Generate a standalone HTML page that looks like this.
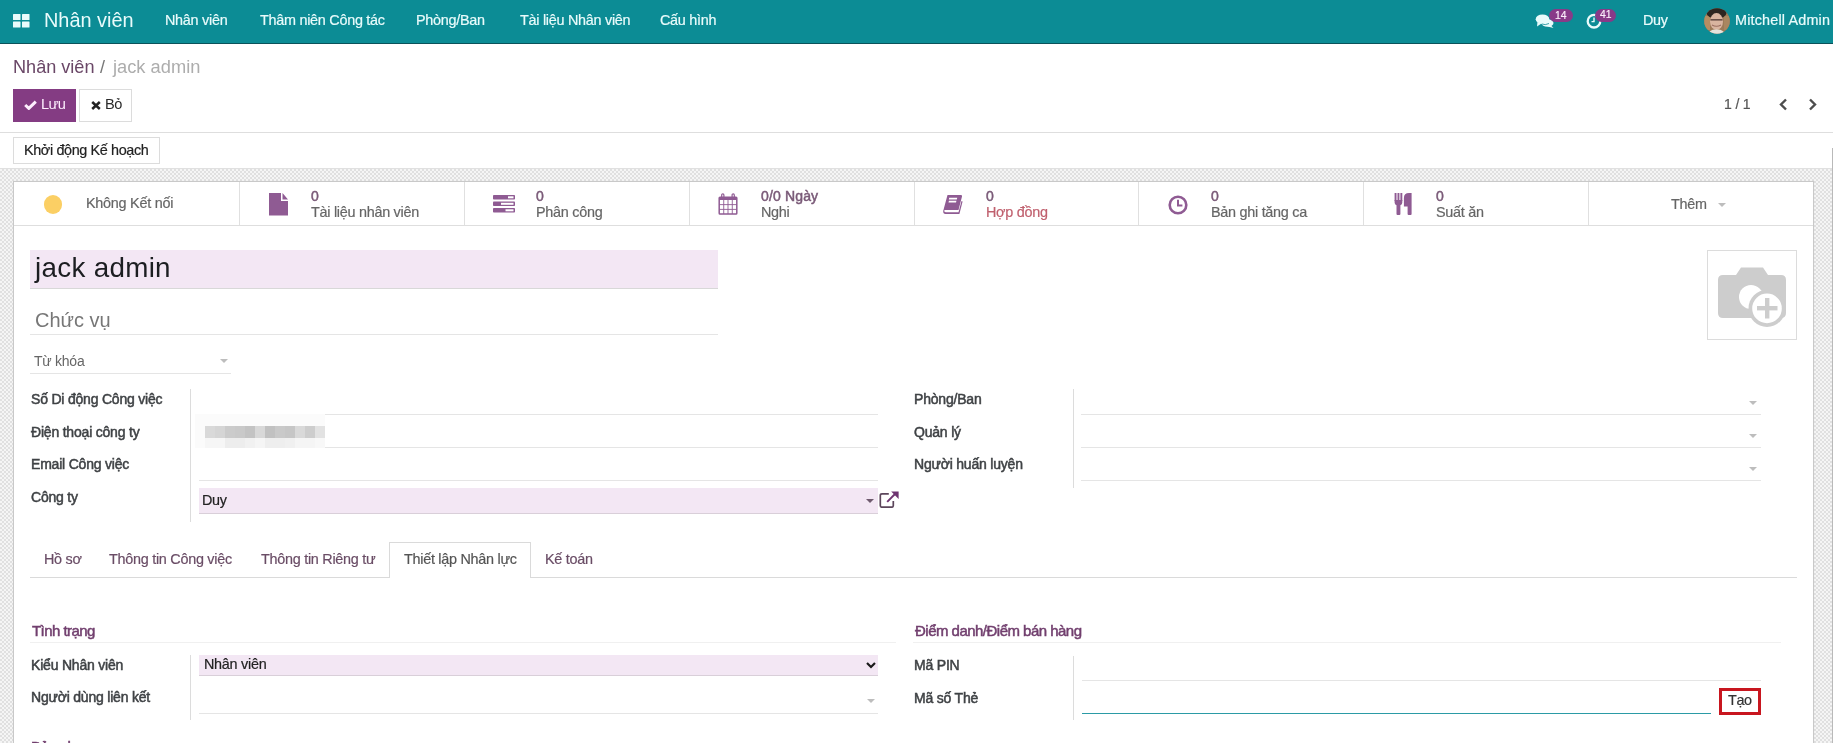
<!DOCTYPE html>
<html><head><meta charset="utf-8">
<style>
html,body{margin:0;padding:0;}
body{width:1833px;height:743px;overflow:hidden;position:relative;background:#fff;font-family:"Liberation Sans",sans-serif;color:#4c4c4c;}
.a{position:absolute;}
.t{position:absolute;line-height:1;white-space:nowrap;will-change:transform;}
.nav{left:0;top:0;width:1833px;height:44px;background:#0c8c95;border-bottom:1px solid #0b525a;box-sizing:border-box;}
.bg{left:0;top:168px;width:1833px;height:575px;border-top:1px solid #e0e0e0;box-sizing:border-box;
 background:repeating-conic-gradient(#e0e0e0 0 25%,#f5f5f5 0 50%) 0 0/4px 4px;}
.sheet{left:13px;top:181px;width:1801px;height:600px;background:#fff;border:1px solid #c9c9c9;box-sizing:border-box;box-shadow:0 0 1px rgba(0,0,0,.08);}
.med{-webkit-text-stroke:0.5px currentColor;}
.rg{-webkit-text-stroke:0.2px currentColor;}
.ul{position:absolute;height:1px;background:#e5e5e5;}
.vl{position:absolute;width:1px;background:#dcdcdc;}
.req{position:absolute;background:#f3e7f4;border-bottom:1px solid #d9cfd9;box-sizing:border-box;}
.sep{position:absolute;width:1px;top:182px;height:43px;background:#e0e0e0;}
</style></head>
<body>
<!-- NAVBAR -->
<div class="a nav"></div>
<svg class="a" style="left:13px;top:14px" width="17" height="14" viewBox="0 0 17 14"><g fill="#e9fbfb"><rect x="0" y="0" width="7.5" height="6" rx="0.5"/><rect x="9" y="0" width="7.5" height="6" rx="0.5"/><rect x="0" y="7.5" width="7.5" height="6" rx="0.5"/><rect x="9" y="7.5" width="7.5" height="6" rx="0.5"/></g></svg>
<svg class="a" style="left:1704px;top:8px;filter:blur(0.45px)" width="26" height="26" viewBox="0 0 26 26"><defs><clipPath id="cp"><circle cx="13" cy="13" r="12.8"/></clipPath></defs><g clip-path="url(#cp)"><rect width="26" height="26" fill="#9c7a58"/><rect x="0" y="8" width="6" height="14" fill="#b58d62"/><rect x="20" y="8" width="6" height="14" fill="#a98660"/><ellipse cx="12.5" cy="5" rx="10" ry="5.5" fill="#2d2520"/><ellipse cx="12.5" cy="13.5" rx="6.5" ry="8.5" fill="#d9b4a0"/><rect x="6.5" y="11" width="12" height="1.6" fill="#6a5048"/><path d="M8 17 Q12.5 19.5 17 17" stroke="#9a6e60" stroke-width="1.2" fill="none"/><path d="M4 26 Q6 21 12.5 21.5 Q19 21 21 26 Z" fill="#e6e2dc"/></g></svg>
<svg class="a" style="left:1535px;top:14px" width="20" height="15" viewBox="0 0 20 15"><g fill="#e9fbfb"><ellipse cx="7.5" cy="5.2" rx="6.8" ry="4.8"/><path d="M2.5 8 L2 12.5 L6.5 9.5 Z"/><ellipse cx="12.5" cy="9" rx="6" ry="3.8"/><path d="M15.5 11 L18.5 14 L12.5 12.5 Z"/></g><path d="M7 10 Q10 11.5 14 9.5" stroke="#0c8c95" stroke-width="0.8" fill="none"/></svg>
<div class="a" style="left:1549px;top:8.8px;width:23.5px;height:13.6px;border-radius:6.8px;background:#883a88"></div>
<svg class="a" style="left:1585px;top:12px" width="18" height="18" viewBox="0 0 18 18"><circle cx="9" cy="9.2" r="6.3" fill="none" stroke="#e9fbfb" stroke-width="2.3"/><path d="M9 5.5 V9.6 H6.5" fill="none" stroke="#e9fbfb" stroke-width="1.4"/></svg>
<div class="a" style="left:1595px;top:8.6px;width:21px;height:13.4px;border-radius:6.7px;background:#883a88"></div>

<div class="t" style="left:44px;top:10.65px;font-size:19.9px;color:#e9fbfb;">Nhân viên</div>
<div class="t rg" style="left:164.5px;top:12.91px;font-size:14.4px;color:#e9fbfb;letter-spacing:-0.27px;">Nhân viên</div>
<div class="t rg" style="left:260px;top:12.91px;font-size:14.4px;color:#e9fbfb;letter-spacing:-0.27px;">Thâm niên Công tác</div>
<div class="t rg" style="left:416px;top:12.91px;font-size:14.4px;color:#e9fbfb;letter-spacing:-0.27px;">Phòng/Ban</div>
<div class="t rg" style="left:519.5px;top:12.91px;font-size:14.4px;color:#e9fbfb;letter-spacing:-0.27px;">Tài liệu Nhân viên</div>
<div class="t rg" style="left:660px;top:12.91px;font-size:14.4px;color:#e9fbfb;letter-spacing:-0.27px;">Cấu hình</div>
<div class="t rg" style="left:1642.5px;top:12.91px;font-size:14.4px;color:#e9fbfb;letter-spacing:-0.27px;">Duy</div>
<div class="t rg" style="left:1734.5px;top:12.91px;font-size:14.4px;color:#e9fbfb;letter-spacing:0.17px;">Mitchell Admin</div>
<div class="t med" style="left:1554.8px;top:10.79px;font-size:10.4px;color:#fbeefb;-webkit-text-stroke-width:0.15px;">14</div>
<div class="t med" style="left:1599.8px;top:10.39px;font-size:10.4px;color:#fbeefb;-webkit-text-stroke-width:0.15px;">41</div>
<!-- CONTROL PANEL -->
<div class="a" style="left:13px;top:89px;width:63px;height:33px;background:#843c83;"></div>
<svg class="a" style="left:24px;top:100px" width="13" height="10" viewBox="0 0 13 10"><path d="M1.2 5 L4.8 8.4 L11.8 1.6" fill="none" stroke="#fdeefd" stroke-width="3"/></svg>
<div class="a" style="left:79px;top:89px;width:53px;height:33px;background:#fff;border:1px solid #dcdcdc;box-sizing:border-box"></div>
<svg class="a" style="left:90.5px;top:101px" width="10" height="9" viewBox="0 0 10 9"><path d="M1.2 1 L8.8 8 M8.8 1 L1.2 8" stroke="#222" stroke-width="2.5"/></svg>
<svg class="a" style="left:1778px;top:98px" width="10" height="13" viewBox="0 0 10 13"><path d="M8 1.5 L3 6.5 L8 11.5" fill="none" stroke="#4d4d4d" stroke-width="2.4"/></svg>
<svg class="a" style="left:1808px;top:98px" width="10" height="13" viewBox="0 0 10 13"><path d="M2 1.5 L7 6.5 L2 11.5" fill="none" stroke="#4d4d4d" stroke-width="2.4"/></svg>
<div class="a" style="left:0;top:132px;width:1833px;height:1px;background:#dedede"></div>
<div class="a" style="left:13px;top:137px;width:147px;height:27px;background:#fff;border:1px solid #dcdcdc;box-sizing:border-box"></div>

<div class="t" style="left:12.5px;top:58.47px;font-size:18.1px;color:#6a4767;">Nhân viên</div>
<div class="t" style="left:99.5px;top:58.36px;font-size:18px;color:#777;">/</div>
<div class="t" style="left:113px;top:58.11px;font-size:18.3px;color:#adadad;">jack admin</div>
<div class="t" style="left:41.2px;top:97.44px;font-size:14.6px;color:#fdeefd;letter-spacing:-0.55px;">Lưu</div>
<div class="t" style="left:104.8px;top:97.44px;font-size:14.6px;color:#2a2a2a;letter-spacing:-0.4px;">Bỏ</div>
<div class="t rg" style="left:1724.3px;top:97.15px;font-size:14px;color:#555;letter-spacing:-0.15px;">1 / 1</div>
<div class="t rg" style="left:24.2px;top:142.81px;font-size:14.4px;color:#222;letter-spacing:-0.37px;">Khởi động Kế hoạch</div>
<!-- BACKGROUND + SHEET -->
<div class="a bg"></div>
<div class="a" style="left:1832px;top:148px;width:1px;height:595px;background:#b9b9b9"></div>
<div class="a sheet"></div>
<div class="a" style="left:14px;top:225px;width:1799px;height:1px;background:#dedede"></div>

<div class="sep" style="left:239px"></div>
<div class="sep" style="left:464px"></div>
<div class="sep" style="left:689px"></div>
<div class="sep" style="left:914px"></div>
<div class="sep" style="left:1138px"></div>
<div class="sep" style="left:1363px"></div>
<div class="sep" style="left:1588px"></div>
<div class="a" style="left:43.5px;top:195px;width:18.5px;height:18.5px;border-radius:50%;background:#fbcf64"></div>
<div class="t rg" style="left:85.6px;top:196.31px;font-size:14.4px;color:#666;letter-spacing:-0.25px;">Không Kết nối</div>
<svg class="a" style="left:269px;top:192.5px" width="20" height="23" viewBox="0 0 20 23"><path d="M0 0 H12 V8 H19 V22.5 H0 Z M13.5 0 L19 6.5 H13.5 Z" fill="#8f5b93"/></svg>
<svg class="a" style="left:492.5px;top:194.5px" width="22" height="18" viewBox="0 0 22 18"><g fill="#8f5b93"><rect x="0" y="0" width="22" height="4.5" rx="0.8"/><rect x="0" y="6.5" width="22" height="4.5" rx="0.8"/><rect x="0" y="13" width="22" height="4.5" rx="0.8"/></g><g fill="#fff"><rect x="15" y="1.3" width="5.5" height="2"/><rect x="8" y="7.8" width="12.5" height="2"/><rect x="12.5" y="14.3" width="8" height="2"/></g></svg>
<svg class="a" style="left:718px;top:193px" width="20" height="22" viewBox="0 0 20 22"><g fill="none" stroke="#8f5b93"><rect x="1.2" y="4.2" width="17.6" height="16.8" rx="0.8" stroke-width="1.5"/><rect x="3.7" y="0.8" width="2.2" height="5" rx="1.1" stroke-width="1.2"/><rect x="14.1" y="0.8" width="2.2" height="5" rx="1.1" stroke-width="1.2"/></g><g fill="#8f5b93"><rect x="1" y="4" width="18" height="3"/><rect x="1" y="11.2" width="18" height="0.9"/><rect x="1" y="15.9" width="18" height="0.9"/><rect x="5.3" y="7" width="0.9" height="14"/><rect x="9.55" y="7" width="0.9" height="14"/><rect x="13.8" y="7" width="0.9" height="14"/></g></svg>
<svg class="a" style="left:943px;top:194.5px" width="20" height="19.5" viewBox="0 0 20 19.5"><path d="M4.5 0 H18 Q19.5 0 19 1.5 L15.5 15 H2 Q1 15 1.3 16.2 Q1.6 17.2 3 17.2 H15.5 L18.5 6 L19.6 6.6 L16.4 19 H2.5 Q0 19 0.2 16 Z" fill="#8f5b93"/><rect x="7" y="2.8" width="8" height="1.6" fill="#fff" transform="skewX(-15)"/><rect x="7.5" y="5.8" width="7.5" height="1.6" fill="#fff" transform="skewX(-15)"/></svg>
<svg class="a" style="left:1168px;top:194.5px" width="20" height="20" viewBox="0 0 20 20"><circle cx="10" cy="10" r="8.3" fill="none" stroke="#8f5b93" stroke-width="2.6"/><path d="M10 4.8 V10.6 H14.4" fill="none" stroke="#8f5b93" stroke-width="2"/></svg>
<svg class="a" style="left:1393.5px;top:193px" width="19" height="22" viewBox="0 0 19 22"><g fill="#8f5b93"><rect x="0.6" y="0" width="1.9" height="8"/><rect x="3.5" y="0" width="1.9" height="8"/><rect x="6.4" y="0" width="1.9" height="8"/><path d="M0.6 7 H8.3 V9.5 Q8.3 11.6 6.4 12.2 V21 Q6.4 22 5.4 22 H3.5 Q2.5 22 2.5 21 V12.2 Q0.6 11.6 0.6 9.5 Z"/><path d="M17.6 0 V21 Q17.6 22 16.6 22 H14.6 Q13.6 22 13.6 21 V13.4 H9.9 V5 Q9.9 0 15 0 Z"/></g></svg>

<div class="t med" style="left:311.0px;top:189.25px;font-size:14px;color:#7a5a78;letter-spacing:-0.2px;">0</div>
<div class="t rg" style="left:311.0px;top:204.61px;font-size:14.4px;color:#666;letter-spacing:-0.27px;">Tài liệu nhân viên</div>
<div class="t med" style="left:536.0px;top:189.25px;font-size:14px;color:#7a5a78;letter-spacing:-0.2px;">0</div>
<div class="t rg" style="left:536.0px;top:204.61px;font-size:14.4px;color:#666;letter-spacing:-0.27px;">Phân công</div>
<div class="t med" style="left:760.5px;top:189.25px;font-size:14px;color:#7a5a78;letter-spacing:0.15px;">0/0 Ngày</div>
<div class="t rg" style="left:760.5px;top:204.61px;font-size:14.4px;color:#666;letter-spacing:-0.27px;">Nghi</div>
<div class="t med" style="left:985.9px;top:189.25px;font-size:14px;color:#7a5a78;letter-spacing:-0.2px;">0</div>
<div class="t rg" style="left:985.9px;top:204.61px;font-size:14.4px;color:#c0606e;letter-spacing:-0.27px;">Hợp đồng</div>
<div class="t med" style="left:1210.5px;top:189.25px;font-size:14px;color:#7a5a78;letter-spacing:-0.2px;">0</div>
<div class="t rg" style="left:1210.5px;top:204.61px;font-size:14.4px;color:#666;letter-spacing:-0.27px;">Bản ghi tăng ca</div>
<div class="t med" style="left:1435.8px;top:189.25px;font-size:14px;color:#7a5a78;letter-spacing:-0.2px;">0</div>
<div class="t rg" style="left:1435.8px;top:204.61px;font-size:14.4px;color:#666;letter-spacing:-0.27px;">Suất ăn</div>
<div class="t rg" style="left:1670.5px;top:197.21px;font-size:14.4px;color:#666;letter-spacing:-0.3px;">Thêm</div>
<svg class="a" style="left:1717.5px;top:203px" width="8" height="4" viewBox="0 0 8 4"><path d="M0 0 H8 L4 4 Z" fill="#bdbdbd"/></svg>
<div class="req" style="left:30px;top:250px;width:688px;height:39px;border-bottom-color:#d8d8d8"></div>
<div class="t" style="left:35.2px;top:254.46px;font-size:27.8px;color:#1c1e21;letter-spacing:0.3px;">jack admin</div>
<div class="t" style="left:34.7px;top:309.67px;font-size:20px;color:#777;">Chức vụ</div>
<div class="ul" style="left:30px;top:334px;width:688px"></div>
<div class="t" style="left:34.2px;top:353.95px;font-size:14px;color:#666;letter-spacing:-0.25px;">Từ khóa</div>
<svg class="a" style="left:219.5px;top:359px" width="8" height="4" viewBox="0 0 8 4"><path d="M0 0 H8 L4 4 Z" fill="#bdbdbd"/></svg>
<div class="ul" style="left:30px;top:373px;width:201px"></div>
<div class="a" style="left:1707px;top:250px;width:90px;height:90px;border:1px solid #dcdcdc;box-sizing:border-box;background:#fff"></div>
<svg class="a" style="left:1707px;top:250px" width="90" height="90" viewBox="0 0 90 90"><g fill="#cdcdcd"><path d="M29 25 L34 17.5 H56 L61 25 H74 Q79 25 79 30 V63 Q79 68 74 68 H16 Q11 68 11 63 V30 Q11 25 16 25 Z"/></g><circle cx="44" cy="47" r="12" fill="#fff"/><circle cx="60" cy="58.4" r="18.5" fill="#cdcdcd"/><circle cx="60" cy="58.4" r="14.8" fill="#fff"/><rect x="50" y="56" width="20.5" height="4.4" fill="#cdcdcd"/><rect x="58" y="48" width="4.4" height="20.5" fill="#cdcdcd"/></svg>

<div class="vl" style="left:190px;top:389px;height:133px"></div>
<div class="t med" style="left:30.5px;top:391.65px;font-size:14px;color:#3f4245;letter-spacing:-0.2px;">Số Di động Công việc</div>
<div class="t med" style="left:30.5px;top:424.75px;font-size:14px;color:#3f4245;letter-spacing:-0.2px;">Điện thoại công ty</div>
<div class="t med" style="left:30.5px;top:457.45px;font-size:14px;color:#3f4245;letter-spacing:-0.2px;">Email Công việc</div>
<div class="t med" style="left:30.5px;top:490.15px;font-size:14px;color:#3f4245;letter-spacing:-0.2px;">Công ty</div>
<div class="ul" style="left:325px;top:414px;width:553px"></div>
<div class="ul" style="left:325px;top:447px;width:553px"></div>
<div class="ul" style="left:199px;top:480px;width:679px"></div>
<div class="a" style="left:195px;top:414px;width:130px;height:34px;background:#fbfbfb"></div>
<div class="a" style="left:205px;top:425.5px;width:120px;height:12.5px;background:linear-gradient(90deg,#d9d9d9 0px,#d9d9d9 10px,#d5d5d5 10px,#d5d5d5 20px,#cbcbcb 20px,#cbcbcb 30px,#c9c9c9 30px,#c9c9c9 40px,#c3c3c3 40px,#c3c3c3 50px,#d8d8d8 50px,#d8d8d8 60px,#c1c1c1 60px,#c1c1c1 70px,#c9c9c9 70px,#c9c9c9 80px,#c6c6c6 80px,#c6c6c6 90px,#d9d9d9 90px,#d9d9d9 100px,#cdcdcd 100px,#cdcdcd 110px,#e2e2e2 110px,#e2e2e2 120px)"></div>
<div class="a" style="left:205px;top:438px;width:120px;height:10px;background:linear-gradient(90deg,#f6f6f6 0px,#f6f6f6 20px,#ededed 20px,#ededed 40px,#f1f1f1 40px,#f1f1f1 50px,#f5f5f5 50px,#f5f5f5 60px,#eeeeee 60px,#eeeeee 80px,#f0f0f0 80px,#f0f0f0 90px,#f5f5f5 90px,#f5f5f5 110px,#f8f8f8 110px,#f8f8f8 120px)"></div>

<div class="req" style="left:199px;top:488px;width:679px;height:25.5px"></div>
<div class="t rg" style="left:202.3px;top:493.01px;font-size:14.4px;color:#222;letter-spacing:-0.27px;">Duy</div>
<svg class="a" style="left:866px;top:498.5px" width="8" height="4" viewBox="0 0 8 4"><path d="M0 0 H8 L4 4 Z" fill="#6f5a6e"/></svg>
<svg class="a" style="left:879px;top:491px" width="20" height="17" viewBox="0 0 20 17"><path d="M9.8 2.8 H3 Q1.3 2.8 1.3 4.5 V14.5 Q1.3 16.2 3 16.2 H12.6 Q14.3 16.2 14.3 14.5 V10" fill="none" stroke="#5c465b" stroke-width="1.7"/><path d="M8.2 10.8 L16.5 2.5" stroke="#6e3470" stroke-width="1.9"/><path d="M12.2 0.6 H19.6 V8 Z" fill="#6e3470"/></svg>
<div class="vl" style="left:1073px;top:389px;height:99px"></div>
<div class="t med" style="left:914px;top:391.65px;font-size:14px;color:#3f4245;letter-spacing:-0.2px;">Phòng/Ban</div>
<div class="t med" style="left:914px;top:424.75px;font-size:14px;color:#3f4245;letter-spacing:-0.2px;">Quản lý</div>
<div class="t med" style="left:914px;top:457.45px;font-size:14px;color:#3f4245;letter-spacing:-0.2px;">Người huấn luyện</div>
<div class="ul" style="left:1081px;top:414px;width:680px"></div>
<svg class="a" style="left:1748.5px;top:400.5px" width="8" height="4" viewBox="0 0 8 4"><path d="M0 0 H8 L4 4 Z" fill="#bdbdbd"/></svg>
<div class="ul" style="left:1081px;top:447px;width:680px"></div>
<svg class="a" style="left:1748.5px;top:433.5px" width="8" height="4" viewBox="0 0 8 4"><path d="M0 0 H8 L4 4 Z" fill="#bdbdbd"/></svg>
<div class="ul" style="left:1081px;top:480px;width:680px"></div>
<svg class="a" style="left:1748.5px;top:466.5px" width="8" height="4" viewBox="0 0 8 4"><path d="M0 0 H8 L4 4 Z" fill="#bdbdbd"/></svg>
<div class="ul" style="left:30px;top:577px;width:1767px;background:#dadada"></div>
<div class="a" style="left:389px;top:542px;width:142px;height:36px;border:1px solid #dadada;border-bottom:none;background:#fff;box-sizing:border-box"></div>
<div class="t rg" style="left:44px;top:551.71px;font-size:14.4px;color:#6a4d66;letter-spacing:-0.27px;">Hồ sơ</div>
<div class="t rg" style="left:108.8px;top:551.71px;font-size:14.4px;color:#6a4d66;letter-spacing:-0.27px;">Thông tin Công việc</div>
<div class="t rg" style="left:261px;top:551.71px;font-size:14.4px;color:#6a4d66;letter-spacing:-0.27px;">Thông tin Riêng tư</div>
<div class="t rg" style="left:403.6px;top:551.71px;font-size:14.4px;color:#555;letter-spacing:-0.27px;">Thiết lập Nhân lực</div>
<div class="t rg" style="left:545px;top:551.71px;font-size:14.4px;color:#6a4d66;letter-spacing:-0.27px;">Kế toán</div>
<div class="t med" style="left:31.5px;top:622.90px;font-size:15px;color:#713f6e;letter-spacing:-0.56px;">Tình trạng</div>
<div class="ul" style="left:30px;top:642px;width:866px;background:#f0f0f0"></div>
<div class="t med" style="left:914.5px;top:623.10px;font-size:15px;color:#713f6e;letter-spacing:-0.52px;">Điểm danh/Điểm bán hàng</div>
<div class="ul" style="left:913px;top:642px;width:868px;background:#f0f0f0"></div>
<div class="vl" style="left:190px;top:655px;height:65px"></div>
<div class="t med" style="left:30.8px;top:657.55px;font-size:14px;color:#3f4245;letter-spacing:-0.2px;">Kiểu Nhân viên</div>
<div class="t med" style="left:30.8px;top:690.35px;font-size:14px;color:#3f4245;letter-spacing:-0.2px;">Người dùng liên kết</div>
<div class="req" style="left:199px;top:655px;width:679px;height:20.5px"></div>
<div class="t rg" style="left:203.8px;top:657.21px;font-size:14.4px;color:#222;letter-spacing:-0.27px;">Nhân viên</div>
<svg class="a" style="left:865.5px;top:662px" width="10" height="7" viewBox="0 0 10 7"><path d="M1 1 L5 5 L9 1" fill="none" stroke="#1a1a1a" stroke-width="2.2"/></svg>
<div class="ul" style="left:199px;top:713px;width:679px"></div>
<svg class="a" style="left:866.5px;top:699px" width="8" height="4" viewBox="0 0 8 4"><path d="M0 0 H8 L4 4 Z" fill="#bdbdbd"/></svg>
<div class="vl" style="left:1073px;top:656px;height:64px"></div>
<div class="t med" style="left:914.4px;top:657.55px;font-size:14px;color:#3f4245;letter-spacing:-0.2px;">Mã PIN</div>
<div class="t med" style="left:914.4px;top:690.65px;font-size:14px;color:#3f4245;letter-spacing:-0.2px;">Mã số Thẻ</div>
<div class="ul" style="left:1082px;top:680px;width:679px"></div>
<div class="a" style="left:1082px;top:712.5px;width:629px;height:1.5px;background:#2b9ba6"></div>
<div class="a" style="left:1719px;top:687.8px;width:42px;height:27.4px;border:3.4px solid #c8161f;box-sizing:border-box"></div>
<div class="t rg" style="left:1727.6px;top:692.81px;font-size:14.4px;color:#333;letter-spacing:-0.4px;">Tạo</div>
<div class="t med" style="left:31.4px;top:738.50px;font-size:15px;color:#713f6e;letter-spacing:-0.55px;">Bảng lương</div>
</body></html>
